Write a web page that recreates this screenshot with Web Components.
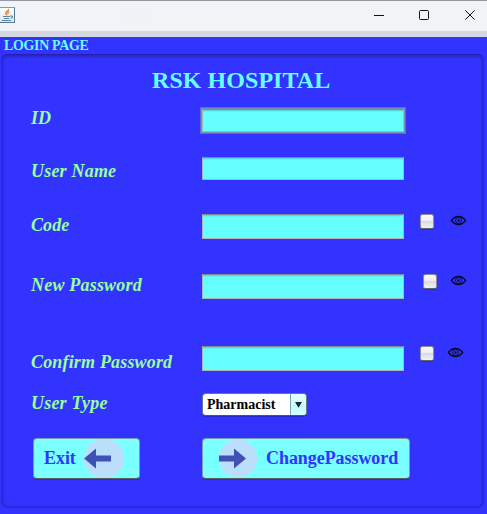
<!DOCTYPE html>
<html lang="en"><head><meta charset="utf-8"><title>Login page</title>
<style>html,body{margin:0;height:100%;overflow:hidden;background:#3333ff}body{font-family:"Liberation Serif",serif;font-weight:bold}</style></head>
<body>
<hospital-window></hospital-window>
<script>
const define=(name,html)=>customElements.define(name,class extends HTMLElement{
  constructor(){super();const t=document.createElement('template');t.innerHTML=html;
    this.attachShadow({mode:'open'}).append(t.content.cloneNode(true));}
});
define('title-bar',`<style>
:host{display:flex;box-sizing:border-box;height:37px;border-top:1px solid #9496a0;border-bottom:6px solid #d6d8e1;background:linear-gradient(90deg,#f0f3f8,#f2f3f5 70%);justify-content:space-between}
svg{display:block}</style>
<svg width="16" height="30" viewBox="0 1 16 30"><defs><linearGradient id="g" x2="0" y2="1"><stop stop-color="#fff"/><stop offset="1" stop-color="#dce5ec"/></linearGradient></defs>
<rect x="-1" y="7.5" width="15.5" height="15" fill="url(#g)" stroke="#8398a8"/><path d="M14.5 8v14.5H0" fill="none" stroke="#557991"/>
<path d="M8.5 9c1 2-3.8 2.7-2.8 4.6.3.7 1 1.1 1 2M9.5 11.5c-2 1-2.3 1.8-1.2 2.8" fill="none" stroke="#e88125" stroke-width="1.3"/>
<path d="M3 16.5h7M4 18.5h5M2 20.5h9M10 16h1.5c2 .2 1 2-.8 2.2" fill="none" stroke="#6287a5" stroke-width="1.1"/></svg>
<svg width="120" height="30" viewBox="367 1 120 30" fill="none" stroke="#111"><path d="M374 15.5h10"/><rect x="419.5" y="10.5" width="9" height="9" rx="1"/><path d="M465.3 10.3l9.4 9.4M474.7 10.3l-9.4 9.4"/></svg>`);
define('form-row',`<style>
:host{display:flex;align-items:flex-start;height:var(--h)}
.label{width:171px;flex:none;font:italic bold 18px/20px "Liberation Serif",serif;letter-spacing:var(--ls,0);color:#99ff99;margin-top:var(--lt,0);white-space:nowrap}
</style><div class="label"><slot name="label"></slot></div><slot></slot>`);
define('text-field',`<style>
:host{display:block;box-sizing:border-box;width:202px;height:25px;flex:none;background:linear-gradient(#5bd8df 0 1px,#62f2f5 1px 2px,#66ffff 2px);border:1px solid #aab4b6;border-top:1px solid #808c93}
:host([focused]){height:23px;margin-top:-1px;border-top-color:#7b8c91;box-shadow:0 0 0 1px #7791ae,0 0 0 2px #536fd2}
:host([short]){height:23px}</style>`);
define('check-box',`<style>
:host{display:block;box-sizing:border-box;width:14px;height:15px;flex:none;margin-left:var(--x,16px);border:1px solid #8c8d96;border-bottom-color:#62656e;border-radius:2.5px;background:linear-gradient(#f8f8fa,#eeeef0 45%,#d8dbe1 50%,#eff1f4);box-shadow:0 1px 0 #2929cc}</style>`);
define('eye-icon',`<style>:host{display:block;flex:none;margin:1px 0 0 var(--x,16px)}svg{display:block}</style>
<svg width="17" height="11" viewBox="0 0 17 11"><path d="M1.4 5.5Q4.5 1.5 8.5 1.5T15.6 5.5Q12.5 9.5 8.5 9.5T1.4 5.5Z" fill="none" stroke="#080822" stroke-width="1.3"/><circle cx="8.5" cy="5.5" r="3" fill="none" stroke="#080822" stroke-width=".9"/><circle cx="8.5" cy="5.5" r="1.2" fill="#080822"/></svg>`);
define('combo-box',`<style>
:host{display:flex;box-sizing:border-box;width:105px;height:23px;border:1px solid #6d7489;border-bottom-color:#50545c;border-radius:4px;background:#fff;overflow:hidden;box-shadow:0 1px 0 #2929cc}
span{flex:1;padding-left:4px;font:bold 14px/21px "Liberation Serif",serif;color:#000}
i{display:grid;place-items:center;width:15px;border-left:1px solid #78a8b3;background:linear-gradient(#e0ffff,#d2ffff 50%,#bdfafb 50%,#d7ffff)}</style>
<span><slot></slot></span><i><svg width="7" height="6"><path d="M0 0h7L3.5 5.7z" fill="#172b2b"/></svg></i>`);
define('push-button',`<style>
:host{display:flex;align-items:center;box-sizing:border-box;height:41px;border:1px solid #779baf;border-bottom-color:#53605f;border-radius:4px;background:linear-gradient(#80ffff,#77ffff 50%,#80ffff);color:#3333ff;font:bold 18px/20px "Liberation Serif",serif;letter-spacing:-.06px;box-shadow:0 1px 0 #2b2bd4}
::slotted(span){padding-bottom:2px}
</style><slot></slot>`);
define('arrow-icon',`<style>:host{display:block;width:40px;height:39px}svg{display:block}
.r{display:none}:host([flip]) .r{display:inline}:host([flip]) .l{display:none}</style>
<svg width="40" height="39" viewBox="0 0 40 39"><g class="l"><circle cx="20" cy="19.5" r="20" fill="#bbdefb"/><path d="M0 19.5L12 9.5V16.5H27V22.5H12V29.5Z" fill="#3f51b5"/></g><g class="r"><circle cx="20" cy="19.5" r="19" fill="#bbdefb"/><path d="M28 19.5L16 9.5V16.5H1V22.5H16V29.5Z" fill="#3f51b5"/></g></svg>`);
define('titled-panel',`<style>
:host{display:block}.t{height:17px;padding-left:4px;font:bold 14px/17px "Liberation Serif",serif;letter-spacing:-.35px;color:#66ffff}
.f{box-sizing:border-box;width:483px;height:454px;margin-left:1px;border:1px solid #2a2ad0;border-top-color:#2222a8;border-radius:6px;box-shadow:inset 0 2px 2px #2929cd,inset 1px 0 3px #2929cd,inset -1px 0 2px #2929cd;padding:12px 0 0 29px}</style>
<div class="t"><slot name="title"></slot></div><div class="f"><slot></slot></div>`);
define('hospital-window',`<style>
:host{display:block;width:487px;height:514px;background:#3333ff;overflow:hidden}
h1{margin:0 0 0 121px;height:43px;font:bold 24px/27px "Liberation Serif",serif;letter-spacing:.05px;color:#66ffff;white-space:nowrap}
.b{display:flex}</style>
<title-bar></title-bar>
<titled-panel><span slot="title">LOGIN PAGE</span>
<h1>RSK HOSPITAL</h1>
<form-row style="--h:47px;--lt:-2px"><span slot="label">ID</span><text-field focused></text-field></form-row>
<form-row style="--h:57px;--lt:4px;--ls:.2px"><span slot="label">User Name</span><text-field short></text-field></form-row>
<form-row style="--h:60px;--lt:1px;--ls:.1px"><span slot="label">Code</span><text-field></text-field><check-box></check-box><eye-icon></eye-icon></form-row>
<form-row style="--h:72px;--lt:1px;--ls:.2px"><span slot="label">New Password</span><text-field></text-field><check-box style="--x:19px"></check-box><eye-icon style="--x:13px"></eye-icon></form-row>
<form-row style="--h:47px;--lt:6px;--ls:.17px"><span slot="label">Confirm Password</span><text-field></text-field><check-box></check-box><eye-icon style="--x:13px"></eye-icon></form-row>
<form-row style="--h:45px;--ls:.2px"><span slot="label">User Type</span><combo-box>Pharmacist</combo-box></form-row>
<div class="b"><push-button style="width:107px;margin-left:2px;padding-left:10px;gap:8px"><span>Exit</span><arrow-icon></arrow-icon></push-button>
<push-button style="width:208px;margin-left:62px;padding-left:15px;gap:8px"><arrow-icon flip></arrow-icon><span>ChangePassword</span></push-button></div>
</titled-panel>`);
</script></body></html>
